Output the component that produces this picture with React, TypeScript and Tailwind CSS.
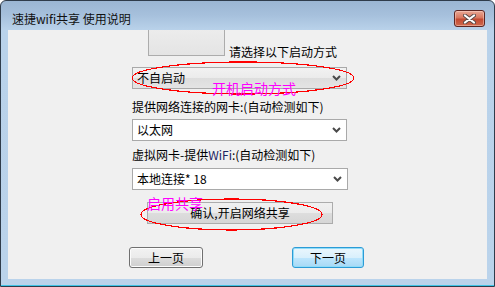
import React from 'react';

function Chevron() {
    return (
        <svg width="9" height="6" viewBox="0 0 9 6" className="shrink-0">
            <polyline points="1,1 4.5,4.5 8,1" fill="none" stroke="#4a4a4a" strokeWidth="2" />
        </svg>
    );
}

function Combo({ text, gray, width }: { text: string; gray?: boolean; width: string }) {
    return (
        <div
            className={`${width} h-[22px] ml-[124px] flex items-center justify-between pl-[4px] pr-[5px] border border-[#a9a9a9] text-[12px] text-black leading-[16px] ${
                gray ? 'bg-[linear-gradient(to_bottom,#f2f2f2,#ebebeb_50%,#dddddd_51%,#e4e4e4)]' : 'bg-white'
            }`}
        >
            <span>{text}</span>
            <Chevron />
        </div>
    );
}

function CloseButton() {
    return (
        <div className="mt-[9px] w-[31px] h-[17px] rounded-[3px] border border-[#5d2622] bg-[linear-gradient(to_bottom,#e9a895,#d8775f_45%,#c34a32_55%,#cf6a4e)] shadow-[inset_0_0_0_1px_rgba(255,220,210,0.45)] flex items-center justify-center">
            <svg width="13" height="10" viewBox="0 0 13 10">
                <path d="M2 1.5 L11 8.5 M11 1.5 L2 8.5" stroke="#5a4a48" strokeWidth="4" strokeLinecap="round" />
                <path d="M2 1.5 L11 8.5 M11 1.5 L2 8.5" stroke="#ffffff" strokeWidth="2.2" strokeLinecap="round" />
            </svg>
        </div>
    );
}

export default function App() {
    return (
        <div className="w-[495px] h-[287px] overflow-hidden bg-white">
            <div className="w-[495px] h-[287px] flex flex-col rounded-t-[6px] border border-[#2f3c4b] bg-[linear-gradient(to_bottom,#9bb6d3_0px,#a6c0dc_14px,#b9d2ea_29px,#bad3eb_100%)] font-['Noto_Sans_CJK_SC','Microsoft_YaHei',sans-serif]">
                {/* title bar */}
                <div className="h-[29px] flex items-start justify-between pl-[11px] pr-[9px]">
                    <span className="mt-[10px] text-[12px] leading-[16px] text-[#111]">速捷wifi共享 使用说明</span>
                    <CloseButton />
                </div>

                {/* client area */}
                <div className="relative mx-[7px] h-[249px] bg-[#f0f0f0] flex flex-col">
                    <div className="flex items-start">
                        <div className="ml-[140px] w-[77px] h-[26px] border-x border-b border-[#acacac] bg-[linear-gradient(to_bottom,#ececec,#e4e4e4)]" />
                        <span className="ml-[4px] mt-[14px] text-[12px] leading-[16px] text-black">请选择以下启动方式</span>
                    </div>

                    <div className="mt-[7px]">
                        <Combo text="不自启动" gray width="w-[215px]" />
                    </div>

                    <div className="mt-[10px] ml-[124px] text-[12px] leading-[16px] text-black">提供网络连接的网卡:(自动检测如下)</div>

                    <div className="mt-[4px]">
                        <Combo text="以太网" width="w-[215px]" />
                    </div>

                    <div className="mt-[6px] ml-[124px] text-[12px] leading-[16px] text-black">
                        虚拟网卡-提供<span className="text-[#1b2461]">WiFi</span>:(自动检测如下)
                    </div>

                    <div className="mt-[5px]">
                        <Combo text="本地连接* 18" width="w-[216px]" />
                    </div>

                    <button className="mt-[12px] ml-[139px] w-[186px] h-[22px] border border-[#acacac] bg-[linear-gradient(to_bottom,#f0f0f0,#ebebeb_50%,#dddddd_51%,#d6d6d6)] text-[12px] leading-[16px] text-black">
                        确认,开启网络共享
                    </button>

                    <div className="mt-[23px] flex">
                        <button className="ml-[121px] w-[74px] h-[21px] rounded-[3px] border border-[#707070] bg-[linear-gradient(to_bottom,#f2f2f2,#ebebeb_50%,#dddddd_51%,#cfcfcf)] shadow-[inset_0_0_0_1px_#fcfcfc] text-[12px] leading-[16px] text-black">
                            上一页
                        </button>
                        <button className="ml-[89px] w-[72px] h-[21px] rounded-[3px] border border-[#2c9bd6] bg-[linear-gradient(to_bottom,#eaf6fd,#d9f0fc_50%,#bee6fd_51%,#a7d9f5)] shadow-[inset_0_0_0_1px_#8fdcf8] text-[12px] leading-[16px] text-black">
                            下一页
                        </button>
                    </div>

                    {/* annotations drawn over the dialog */}
                    <svg className="absolute left-[122px] top-[30px]" width="228" height="36" shapeRendering="crispEdges">
                        <ellipse cx="113" cy="18" rx="111" ry="16" fill="none" stroke="#ff0000" strokeWidth="1.2" />
                    </svg>
                    <span className="absolute left-[204px] top-[50px] text-[14px] leading-[16px] text-[#ff00ff]">开机启动方式</span>

                    <svg className="absolute left-[131px] top-[167px]" width="186" height="36" shapeRendering="crispEdges">
                        <ellipse cx="92.5" cy="17.5" rx="90.5" ry="15.5" fill="none" stroke="#ff0000" strokeWidth="1.2" />
                    </svg>
                    <span className="absolute left-[139px] top-[165px] text-[14px] leading-[16px] text-[#ff00ff]">启用共享</span>
                </div>

                <div className="h-[6px]" />
                <div className="h-[1px] bg-[#3fc4e6]" />
            </div>
        </div>
    );
}
